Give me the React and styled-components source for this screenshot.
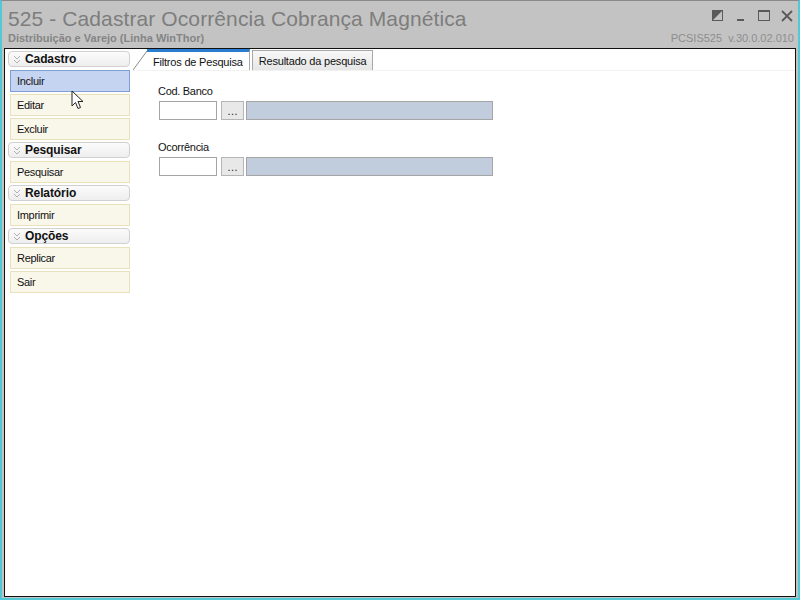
import React from "react";
import styled, { createGlobalStyle } from "styled-components";

const Global = createGlobalStyle`
  html, body { margin: 0; padding: 0; }
  body { font-family: "Liberation Sans", Arial, sans-serif; }
`;

const Frame = styled.div`
  width: 800px;
  height: 600px;
  box-sizing: border-box;
  background: #c3c3c3;
  border-left: 2px solid #54c9d6;
  border-right: 2px solid #54c9d6;
  border-bottom: 2px solid #54c9d6;
  border-top: 1px solid #8a8a8a;
  display: flex;
  flex-direction: column;
`;

const TitleBar = styled.div`
  height: 47px;
  display: flex;
  justify-content: space-between;
  padding: 0 4px 0 6px;
`;

const TitleBlock = styled.div`
  display: flex;
  flex-direction: column;
`;

const Title = styled.div`
  font-size: 21px;
  color: #7d7d7d;
  margin-top: 6px;
  line-height: 24px;
  letter-spacing: 0.1px;
`;

const Subtitle = styled.div`
  font-size: 11px;
  font-weight: bold;
  color: #858585;
  margin-top: 1px;
`;

const RightBlock = styled.div`
  display: flex;
  flex-direction: column;
  align-items: flex-end;
`;

const Controls = styled.div`
  display: flex;
  gap: 9px;
  margin-top: 7px;
  height: 16px;
  align-items: center;
`;

const Version = styled.div`
  font-size: 11px;
  color: #8e8e8e;
  margin-top: 8px;
  word-spacing: 3px;
`;

const Body = styled.div`
  flex: 1;
  margin: 0 2px 1px 2px;
  border: 1px solid #111;
  background: #fff;
  display: flex;
`;

const Side = styled.div`
  width: 122px;
  padding: 2px 0 0 3px;
  display: flex;
  flex-direction: column;
`;

const Group = styled.div`
  height: 14px;
  margin-bottom: 3px;
  border: 1px solid #d0d0d0;
  border-radius: 4px;
  background: linear-gradient(#fbfbfb, #eeeeee);
  display: flex;
  align-items: center;
  font-size: 12px;
  font-weight: bold;
  letter-spacing: -0.1px;
  color: #111;
  padding-left: 4px;
  gap: 4px;
`;

const Chev = styled.svg`
  width: 8px;
  height: 9px;
  display: block;
`;

const Item = styled.div`
  height: 20px;
  margin: 0 0 2px 2px;
  box-sizing: content-box;
  border: 1px solid ${(p) => (p.$active ? "#7c9fd6" : "#e8e1bc")};
  background: ${(p) => (p.$active ? "#c5d4f0" : "#f9f7ea")};
  font-size: 11px;
  letter-spacing: -0.3px;
  color: #111;
  display: flex;
  align-items: center;
  padding-left: 6px;
  position: relative;
`;

const Main = styled.div`
  flex: 1;
  display: flex;
  flex-direction: column;
  padding-left: 3px;
`;

const TabStrip = styled.div`
  height: 21px;
  display: flex;
  align-items: flex-end;
  border-bottom: 1px solid #f2f2f2;
`;

const Slant = styled.svg`
  width: 14px;
  height: 21px;
  display: block;
`;

const Tab = styled.div`
  height: ${(p) => (p.$active ? "21px" : "20px")};
  padding: 0 6px;
  font-size: 11px;
  letter-spacing: -0.2px;
  color: #111;
  display: flex;
  align-items: center;
  box-sizing: border-box;
  background: ${(p) => (p.$active ? "#fff" : "linear-gradient(#f8f8f8, #e6e6e6)")};
  border-top: ${(p) => (p.$active ? "3px solid #2a7dcf" : "1px solid #a8a8a8")};
  border-right: 1px solid #a8a8a8;
  ${(p) => (p.$active ? "padding-top: 1px;" : "border-left: 1px solid #a8a8a8; margin-left: 2px;")}
`;

const Form = styled.div`
  padding: 14px 0 0 25px;
  display: flex;
  flex-direction: column;
`;

const Label = styled.div`
  font-size: 11px;
  letter-spacing: -0.3px;
  color: #111;
  height: 14px;
  margin-bottom: 2px;
`;

const FieldRow = styled.div`
  display: flex;
  height: 19px;
  margin-bottom: 21px;
`;

const Code = styled.div`
  width: 56px;
  border: 1px solid #a5a5a5;
  background: #fff;
  margin-left: 1px;
`;

const Dots = styled.div`
  width: 21px;
  margin-left: 4px;
  border: 1px solid #b5b5b5;
  background: #e8e8e8;
  font-size: 11px;
  display: flex;
  align-items: center;
  justify-content: center;
  color: #222;
`;

const Desc = styled.div`
  width: 245px;
  margin-left: 2px;
  border: 1px solid #a5a5a5;
  background: #c1cddd;
`;

const Cursor = styled.svg`
  position: absolute;
  left: 60px;
  top: 19px;
  z-index: 5;
`;

const Icon = ({ children }) => (
  <svg width="14" height="14" viewBox="0 0 14 14">{children}</svg>
);

const Chevron = () => (
  <Chev viewBox="0 0 8 9">
    <path d="M1 1 L4 4 L7 1 M1 5 L4 8 L7 5" fill="none" stroke="#b0b0b0" strokeWidth="1" />
  </Chev>
);

const menu = [
  { title: "Cadastro", items: ["Incluir", "Editar", "Excluir"] },
  { title: "Pesquisar", items: ["Pesquisar"] },
  { title: "Relatório", items: ["Imprimir"] },
  { title: "Opções", items: ["Replicar", "Sair"] },
];

export default function App() {
  return (
    <>
      <Global />
      <Frame>
        <TitleBar>
          <TitleBlock>
            <Title>525 - Cadastrar Ocorrência Cobrança Magnética</Title>
            <Subtitle>Distribuição e Varejo (Linha WinThor)</Subtitle>
          </TitleBlock>
          <RightBlock>
            <Controls>
              <Icon>
                <rect x="1.5" y="1.5" width="10" height="10" fill="none" stroke="#5a5a5a" />
                <polygon points="1.5,11.5 11.5,1.5 1.5,1.5" fill="#5a5a5a" />
              </Icon>
              <Icon>
                <rect x="3" y="10" width="7" height="2" fill="#5a5a5a" />
              </Icon>
              <Icon>
                <rect x="1.5" y="1.5" width="11" height="10" fill="none" stroke="#5a5a5a" />
                <rect x="1.5" y="1.5" width="11" height="1.5" fill="#5a5a5a" />
              </Icon>
              <Icon>
                <path d="M2 2 L12 12 M12 2 L2 12" stroke="#5a5a5a" strokeWidth="1.8" />
              </Icon>
            </Controls>
            <Version>PCSIS525 v.30.0.02.010</Version>
          </RightBlock>
        </TitleBar>
        <Body>
          <Side>
            {menu.map((g) => (
              <React.Fragment key={g.title}>
                <Group>
                  <Chevron />
                  {g.title}
                </Group>
                {g.items.map((it, i) => (
                  <Item key={it} $active={g.title === "Cadastro" && i === 0}>
                    {it}
                    {g.title === "Cadastro" && i === 0 && (
                      <Cursor width="13" height="20" viewBox="0 0 13 20">
                        <path
                          d="M1 1 L1 16 L4.5 12.5 L7 18.5 L9.5 17.5 L7 11.5 L12 11.5 Z"
                          fill="#fff"
                          stroke="#222"
                          strokeWidth="1"
                          strokeLinejoin="round"
                        />
                      </Cursor>
                    )}
                  </Item>
                ))}
              </React.Fragment>
            ))}
          </Side>
          <Main>
            <TabStrip>
              <Slant viewBox="0 0 14 21">
                <line x1="0" y1="21" x2="14" y2="2" stroke="#8a8a8a" strokeWidth="1" />
              </Slant>
              <Tab $active>Filtros de Pesquisa</Tab>
              <Tab>Resultado da pesquisa</Tab>
            </TabStrip>
            <Form>
              <Label>Cod. Banco</Label>
              <FieldRow>
                <Code />
                <Dots>…</Dots>
                <Desc />
              </FieldRow>
              <Label>Ocorrência</Label>
              <FieldRow>
                <Code />
                <Dots>…</Dots>
                <Desc />
              </FieldRow>
            </Form>
          </Main>
        </Body>
      </Frame>
    </>
  );
}
